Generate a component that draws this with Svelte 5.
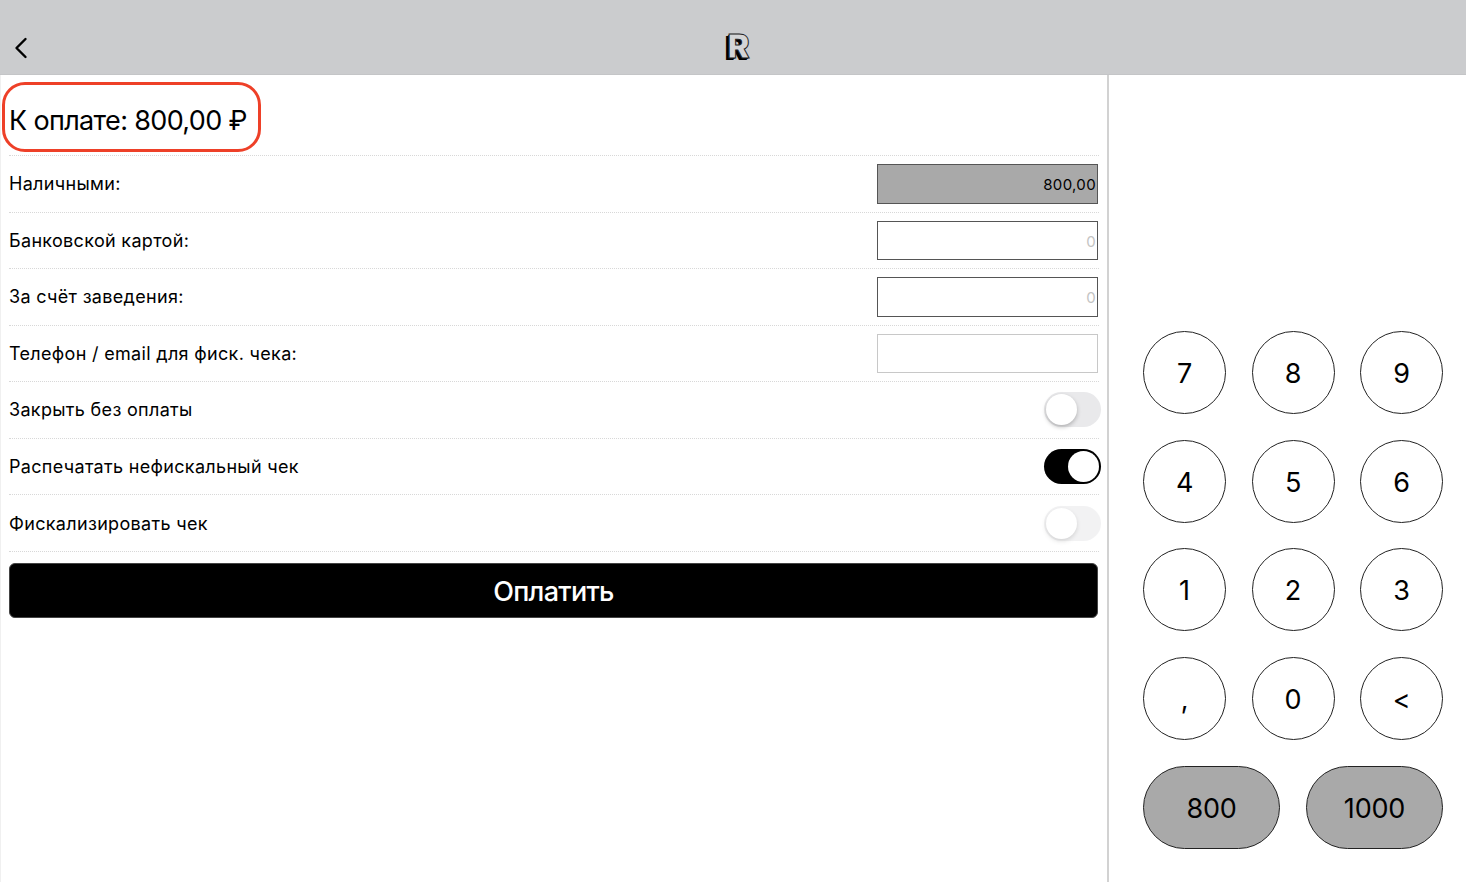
<script lang="ts">
  const fields = [
    { label: 'Наличными:', value: '800,00', tone: 'filled' },
    { label: 'Банковской картой:', placeholder: '0', tone: 'normal' },
    { label: 'За счёт заведения:', placeholder: '0', tone: 'normal' },
    { label: 'Телефон / email для фиск. чека:', placeholder: '', tone: 'faded' },
  ];
  const toggles = [
    { label: 'Закрыть без оплаты', on: false, disabled: false },
    { label: 'Распечатать нефискальный чек', on: true, disabled: false },
    { label: 'Фискализировать чек', on: false, disabled: true },
  ];
  const keys = ['7', '8', '9', '4', '5', '6', '1', '2', '3', ',', '0', '<'];
  const presets = ['800', '1000'];
</script>

<div class="page">
  <header class="topbar">
    <button class="back" aria-label="Назад">
      <svg viewBox="0 0 16 24" width="16" height="24" fill="none" stroke="#000" stroke-width="2.4" stroke-linecap="round" stroke-linejoin="round">
        <path d="M12.5 3 3.5 12l9 9"/>
      </svg>
    </button>
    <span class="logo">R</span>
  </header>

  <div class="body">
    <main class="form">
      <div class="total">
        <h1>К оплате: 800,00 ₽</h1>
        <span class="mark"></span>
      </div>

      {#each fields as f}
        <div class="row">
          <span>{f.label}</span>
          <input class={f.tone} value={f.value ?? ''} placeholder={f.placeholder} readonly />
        </div>
      {/each}

      {#each toggles as t}
        <div class="row">
          <span>{t.label}</span>
          <span class="toggle" class:on={t.on} class:disabled={t.disabled}><i></i></span>
        </div>
      {/each}

      <button class="pay">Оплатить</button>
    </main>

    <aside class="pad">
      <div class="keys">
        {#each keys as k}
          <button class="key">{k}</button>
        {/each}
      </div>
      <div class="presets">
        {#each presets as p}
          <button class="preset">{p}</button>
        {/each}
      </div>
    </aside>
  </div>
</div>

<style>
  :global(body) {
    margin: 0;
    background: #fff;
    color: #000;
    font-family: Inter, "Noto Sans", sans-serif;
  }
  button {
    font: inherit;
    color: inherit;
    padding: 0;
  }
  .page {
    height: 882px;
    overflow: hidden;
    display: flex;
    flex-direction: column;
  }
  .topbar {
    height: 75px;
    flex: none;
    box-sizing: border-box;
    background: #cbccce;
    border-bottom: 1px solid #c4c5c7;
    display: grid;
    grid-template-columns: 1fr auto 1fr;
    align-items: end;
  }
  .back {
    background: none;
    border: 0;
    width: 16px;
    height: 24px;
    margin: 0 0 14px 13px;
  }
  .back svg {
    display: block;
  }
  .logo {
    grid-column: 2;
    font-family: Inter, sans-serif;
    font-weight: 900;
    font-size: 33px;
    line-height: 32px;
    margin-bottom: 12px;
    margin-left: 11px;
    color: #d4d5d7;
    -webkit-text-stroke: 1px #222;
    text-shadow: -1px 1px 0 #000, -2px 2px 0 #000, -3px 2px 0 #000;
  }
  .body {
    flex: 1;
    display: flex;
    min-height: 0;
  }
  .form {
    flex: none;
    box-sizing: border-box;
    padding: 0 8px;
    border-left: 1px solid #f0f0f0;
    border-right: 2px solid #d2d2d2;
    width: 1109px;
  }
  .total {
    position: relative;
    height: 81px;
    display: flex;
    align-items: center;
    border-bottom: 1px dotted #d8d8d8;
    box-sizing: border-box;
  }
  h1 {
    margin: 12px 0 0;
    font-size: 27px;
    font-weight: 400;
    letter-spacing: -0.65px;
    line-height: 1.2;
  }
  .mark {
    position: absolute;
    left: -7px;
    top: 7px;
    width: 253px;
    height: 64px;
    border: 3px solid #ee4028;
    border-radius: 23px;
  }
  .row {
    height: 56.55px;
    box-sizing: border-box;
    display: flex;
    align-items: center;
    justify-content: space-between;
    border-bottom: 1px dotted #d8d8d8;
    font-size: 18px;
    letter-spacing: 0.32px;
  }
  input {
    box-sizing: border-box;
    width: 221px;
    height: 39.5px;
    margin-right: 1px;
    padding: 2px 1px 0 0;
    border: 1px solid #555;
    border-radius: 0;
    outline: 0;
    background: #fff;
    text-align: right;
    font: inherit;
    font-size: 15px;
    letter-spacing: 0.35px;
    color: #000;
  }
  input::placeholder {
    color: #c4c4c4;
  }
  input.filled {
    background: #a9a9a9;
  }
  input.faded {
    border-color: #c8c8c8;
  }
  .toggle {
    box-sizing: border-box;
    width: 57px;
    height: 35px;
    margin-right: -2px;
    border-radius: 18px;
    padding: 1px;
    background: #e9e9eb;
    display: flex;
  }
  .toggle i {
    width: 31px;
    height: 31px;
    margin: 1px;
    border-radius: 50%;
    background: #fff;
    box-shadow: 0 2px 4px rgba(0, 0, 0, 0.25);
  }
  .toggle.on {
    background: #000;
    justify-content: flex-end;
  }
  .toggle.on i {
    box-shadow: none;
  }
  .toggle.disabled {
    opacity: 0.55;
  }
  .pay {
    display: block;
    box-sizing: border-box;
    width: 1089px;
    height: 55px;
    margin-top: 11px;
    padding-top: 2px;
    background: #000;
    color: #fff;
    border: 1px solid #444;
    border-radius: 6px;
    font-size: 27px;
    font-weight: 500;
    letter-spacing: -0.7px;
  }
  .pad {
    flex: 1;
    box-sizing: border-box;
    padding: 0 23px 33px 34px;
    display: flex;
    flex-direction: column;
    justify-content: flex-end;
    gap: 26px;
  }
  .keys {
    display: grid;
    grid-template-columns: repeat(3, 83px);
    justify-content: space-between;
    row-gap: 25.7px;
  }
  .key {
    width: 83px;
    height: 83px;
    padding-top: 2px;
    border: 1px solid #222;
    border-radius: 50%;
    background: #fff;
    font-size: 27px;
    letter-spacing: -0.2px;
  }
  .presets {
    display: flex;
    justify-content: space-between;
  }
  .preset {
    width: 137px;
    height: 83px;
    padding-top: 2px;
    border: 1px solid #222;
    border-radius: 42px;
    background: #a9a9a9;
    font-size: 27px;
    letter-spacing: -0.2px;
  }
</style>
